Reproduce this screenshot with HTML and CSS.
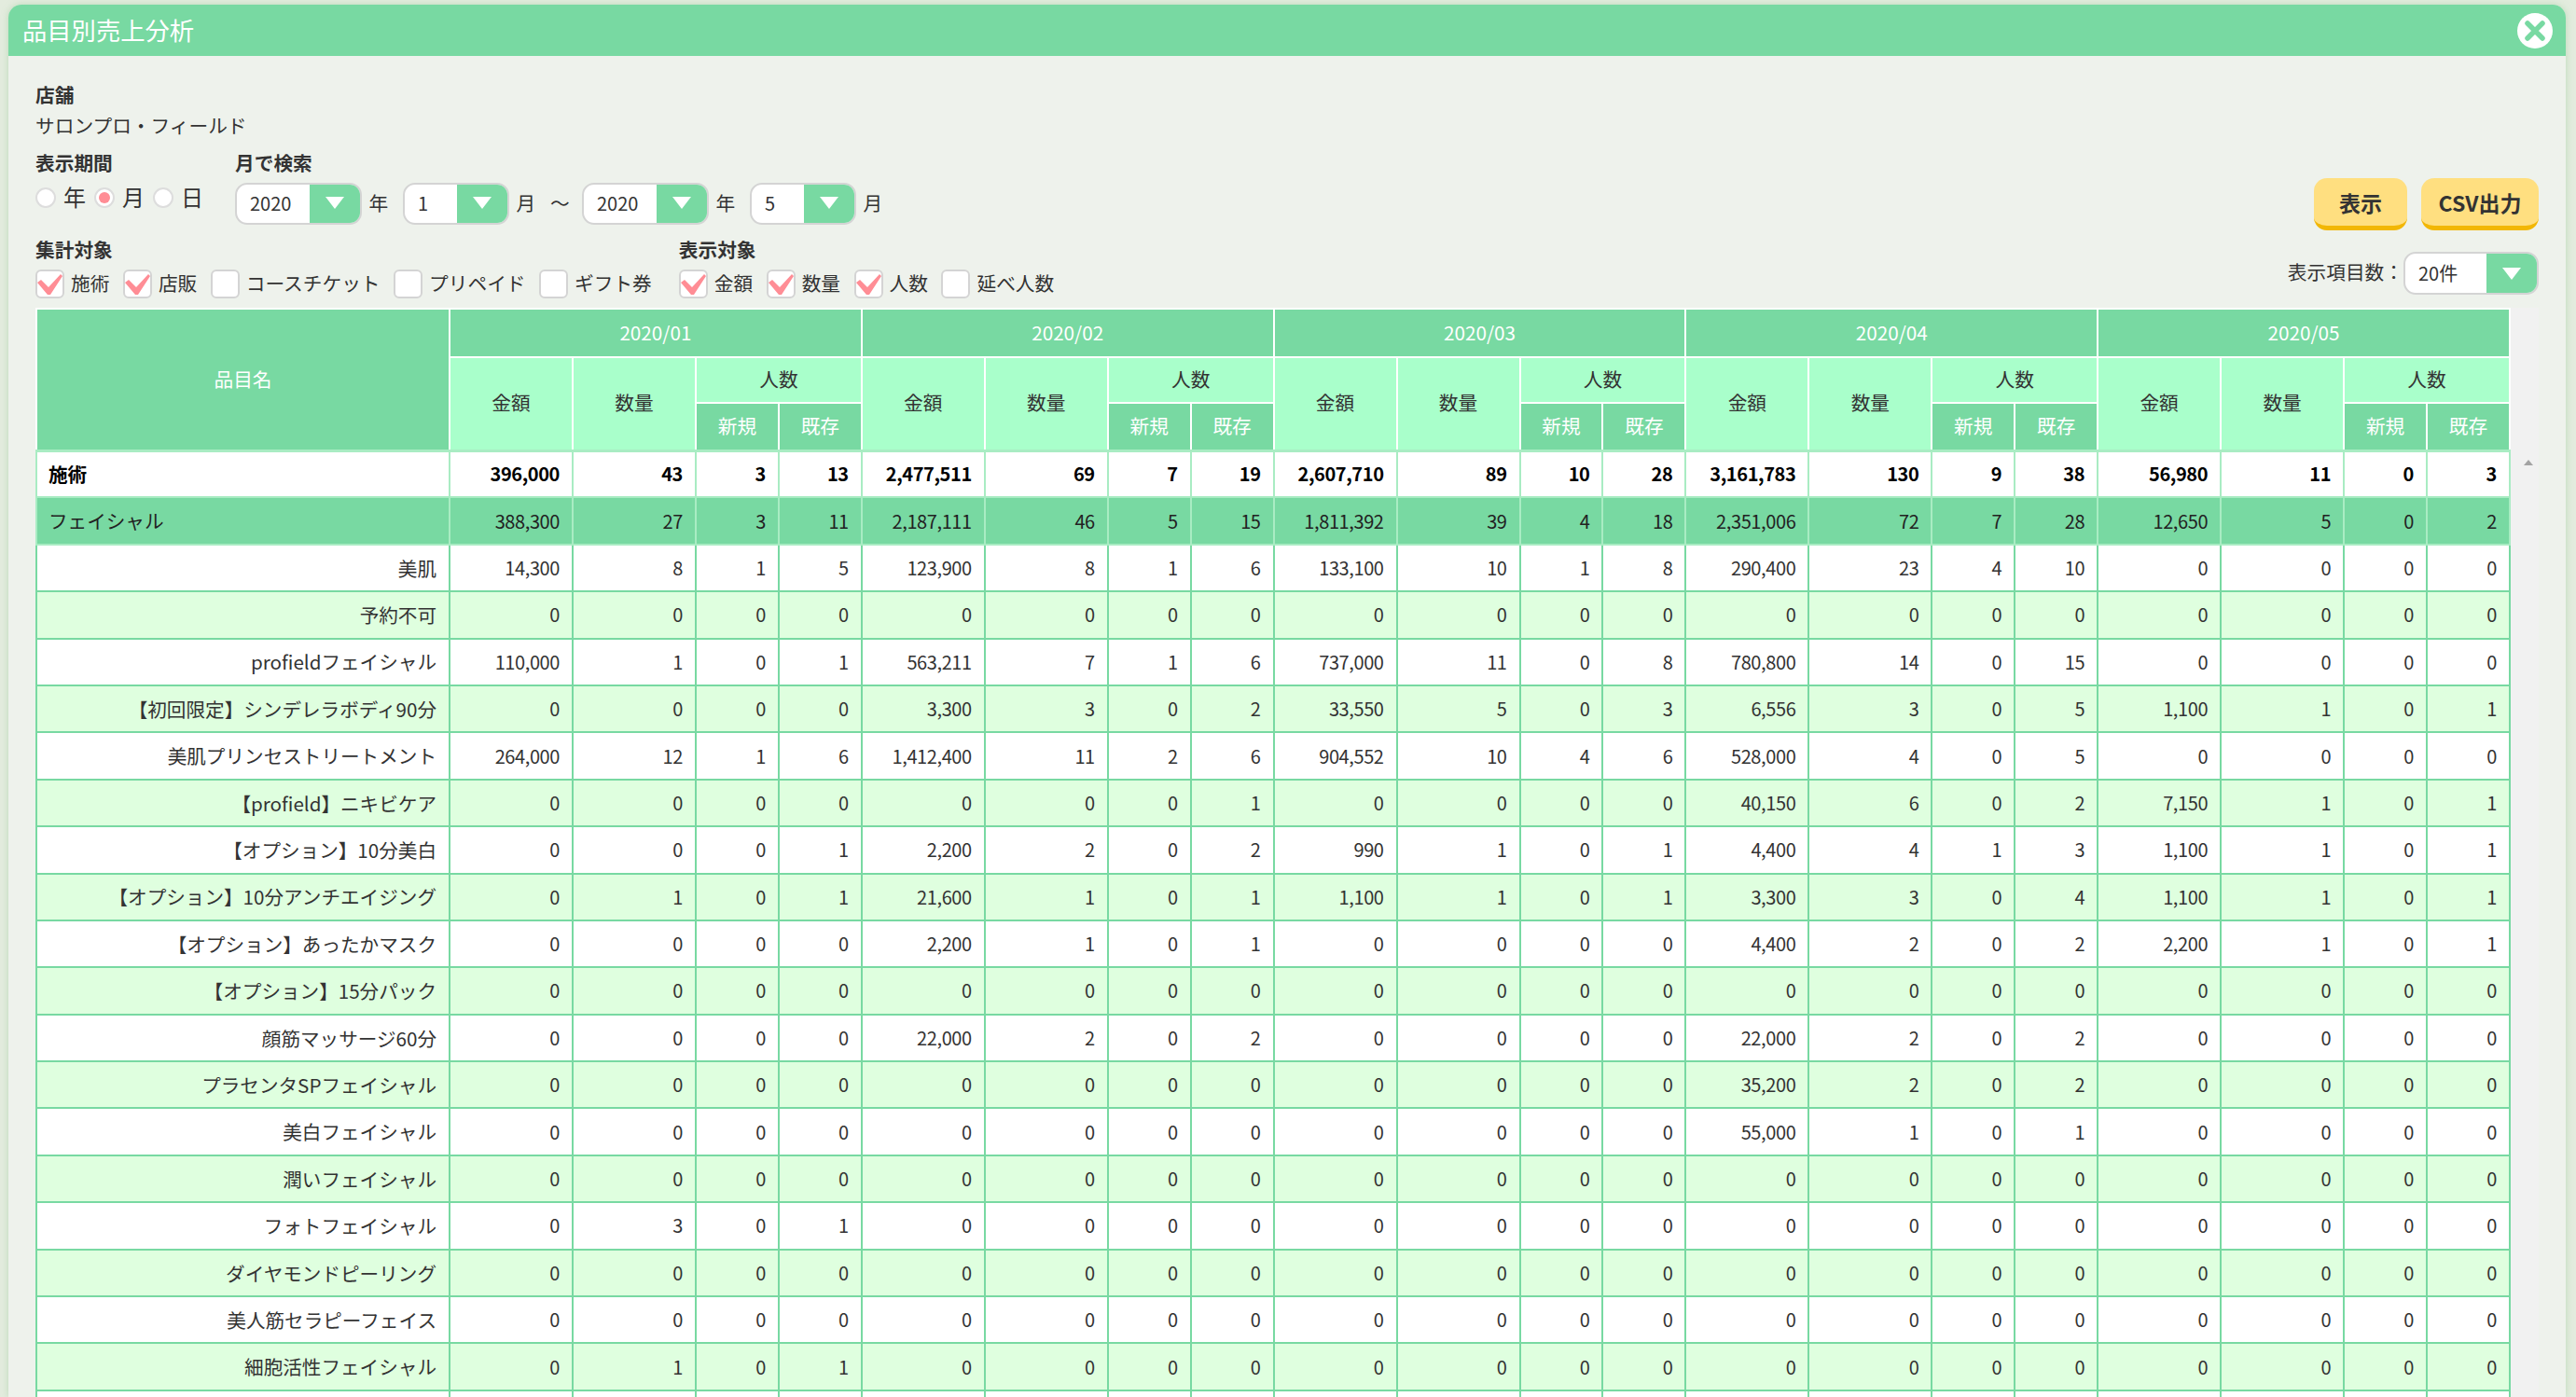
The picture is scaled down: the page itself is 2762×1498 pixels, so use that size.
FILE: index.html
```html
<!DOCTYPE html>
<html lang="ja">
<head>
  <meta charset="UTF-8">
  <title>品目別売上分析</title>
  <link rel="stylesheet" href="styles.css">
</head>
<body>
  <div class="modal">
    <div class="modal-header">
      <h1>品目別売上分析</h1>
      <button class="close-btn" aria-label="閉じる">
        <svg width="38" height="38" viewBox="0 0 38 38"><circle cx="19" cy="19" r="19" fill="#fff"/><path d="M11 11 27 27M27 11 11 27" stroke="#78d9a2" stroke-width="5.5" stroke-linecap="round"/></svg>
      </button>
    </div>

    <div class="modal-body">
      <div class="filters">
        <div class="filters-left">
          <div class="label">店舗</div>
          <div class="shop-name">サロンプロ・フィールド</div>

          <div class="period-row">
            <div class="period-type">
              <div class="label">表示期間</div>
              <div class="radios">
                <span class="radio"></span><span class="radio-text">年</span>
                <span class="radio checked"></span><span class="radio-text">月</span>
                <span class="radio"></span><span class="radio-text">日</span>
              </div>
            </div>
            <div>
              <div class="label">月で検索</div>
              <div class="range">
                <div class="select year"><span>2020</span><i class="arrow"></i></div><span class="unit">年</span>
                <div class="select month"><span>1</span><i class="arrow"></i></div><span class="unit">月</span>
                <span class="tilde">～</span>
                <div class="select year"><span>2020</span><i class="arrow"></i></div><span class="unit">年</span>
                <div class="select month"><span>5</span><i class="arrow"></i></div><span class="unit">月</span>
              </div>
            </div>
          </div>

          <div class="target-row">
            <div class="target-group">
              <div class="label">集計対象</div>
              <div class="checks">
                <label class="check on"><i class="box"><svg width="27" height="27" viewBox="0 0 27 27"><polygon points="0,12 4,9 12,17 25,3 27,5 14,25 11,25" fill="#ff8d95"/></svg></i>施術</label>
                <label class="check on"><i class="box"><svg width="27" height="27" viewBox="0 0 27 27"><polygon points="0,12 4,9 12,17 25,3 27,5 14,25 11,25" fill="#ff8d95"/></svg></i>店販</label>
                <label class="check"><i class="box"></i>コースチケット</label>
                <label class="check"><i class="box"></i>プリペイド</label>
                <label class="check"><i class="box"></i>ギフト券</label>
              </div>
            </div>
            <div class="target-group">
              <div class="label">表示対象</div>
              <div class="checks">
                <label class="check on"><i class="box"><svg width="27" height="27" viewBox="0 0 27 27"><polygon points="0,12 4,9 12,17 25,3 27,5 14,25 11,25" fill="#ff8d95"/></svg></i>金額</label>
                <label class="check on"><i class="box"><svg width="27" height="27" viewBox="0 0 27 27"><polygon points="0,12 4,9 12,17 25,3 27,5 14,25 11,25" fill="#ff8d95"/></svg></i>数量</label>
                <label class="check on"><i class="box"><svg width="27" height="27" viewBox="0 0 27 27"><polygon points="0,12 4,9 12,17 25,3 27,5 14,25 11,25" fill="#ff8d95"/></svg></i>人数</label>
                <label class="check"><i class="box"></i>延べ人数</label>
              </div>
            </div>
          </div>
        </div>

        <div class="filters-right">
          <div class="buttons">
            <button class="btn show-btn">表示</button>
            <button class="btn csv-btn">CSV出力</button>
          </div>
          <div class="page-size">
            <span class="size-label">表示項目数：</span>
            <div class="select size"><span>20件</span><i class="arrow"></i></div>
          </div>
        </div>
      </div>

      <div class="table-wrap">
        <table class="sales">
          <colgroup>
            <col class="c-name">
            <col class="c-amt"><col class="c-qty"><col class="c-ppl"><col class="c-ppl">
            <col class="c-amt"><col class="c-qty"><col class="c-ppl"><col class="c-ppl">
            <col class="c-amt"><col class="c-qty"><col class="c-ppl"><col class="c-ppl">
            <col class="c-amt"><col class="c-qty"><col class="c-ppl"><col class="c-ppl">
            <col class="c-amt"><col class="c-qty"><col class="c-ppl"><col class="c-ppl">
          </colgroup>
          <thead>
            <tr class="head-1">
              <th rowspan="3" class="dark">品目名</th>
              <th colspan="4" class="dark">2020/01</th>
              <th colspan="4" class="dark">2020/02</th>
              <th colspan="4" class="dark">2020/03</th>
              <th colspan="4" class="dark">2020/04</th>
              <th colspan="4" class="dark">2020/05</th>
            </tr>
            <tr class="head-2">
              <th rowspan="2">金額</th><th rowspan="2">数量</th><th colspan="2">人数</th>
              <th rowspan="2">金額</th><th rowspan="2">数量</th><th colspan="2">人数</th>
              <th rowspan="2">金額</th><th rowspan="2">数量</th><th colspan="2">人数</th>
              <th rowspan="2">金額</th><th rowspan="2">数量</th><th colspan="2">人数</th>
              <th rowspan="2">金額</th><th rowspan="2">数量</th><th colspan="2">人数</th>
            </tr>
            <tr class="head-3">
              <th class="dark">新規</th><th class="dark">既存</th>
              <th class="dark">新規</th><th class="dark">既存</th>
              <th class="dark">新規</th><th class="dark">既存</th>
              <th class="dark">新規</th><th class="dark">既存</th>
              <th class="dark">新規</th><th class="dark">既存</th>
            </tr>
          </thead>
          <tbody>
            <tr class="total"><td class="name">施術</td><td>396,000</td><td>43</td><td>3</td><td>13</td><td>2,477,511</td><td>69</td><td>7</td><td>19</td><td>2,607,710</td><td>89</td><td>10</td><td>28</td><td>3,161,783</td><td>130</td><td>9</td><td>38</td><td>56,980</td><td>11</td><td>0</td><td>3</td></tr>
            <tr class="category"><td class="name">フェイシャル</td><td>388,300</td><td>27</td><td>3</td><td>11</td><td>2,187,111</td><td>46</td><td>5</td><td>15</td><td>1,811,392</td><td>39</td><td>4</td><td>18</td><td>2,351,006</td><td>72</td><td>7</td><td>28</td><td>12,650</td><td>5</td><td>0</td><td>2</td></tr>
            <tr><td class="name">美肌</td><td>14,300</td><td>8</td><td>1</td><td>5</td><td>123,900</td><td>8</td><td>1</td><td>6</td><td>133,100</td><td>10</td><td>1</td><td>8</td><td>290,400</td><td>23</td><td>4</td><td>10</td><td>0</td><td>0</td><td>0</td><td>0</td></tr>
            <tr class="alt"><td class="name">予約不可</td><td>0</td><td>0</td><td>0</td><td>0</td><td>0</td><td>0</td><td>0</td><td>0</td><td>0</td><td>0</td><td>0</td><td>0</td><td>0</td><td>0</td><td>0</td><td>0</td><td>0</td><td>0</td><td>0</td><td>0</td></tr>
            <tr><td class="name">profieldフェイシャル</td><td>110,000</td><td>1</td><td>0</td><td>1</td><td>563,211</td><td>7</td><td>1</td><td>6</td><td>737,000</td><td>11</td><td>0</td><td>8</td><td>780,800</td><td>14</td><td>0</td><td>15</td><td>0</td><td>0</td><td>0</td><td>0</td></tr>
            <tr class="alt"><td class="name">【初回限定】シンデレラボディ90分</td><td>0</td><td>0</td><td>0</td><td>0</td><td>3,300</td><td>3</td><td>0</td><td>2</td><td>33,550</td><td>5</td><td>0</td><td>3</td><td>6,556</td><td>3</td><td>0</td><td>5</td><td>1,100</td><td>1</td><td>0</td><td>1</td></tr>
            <tr><td class="name">美肌プリンセストリートメント</td><td>264,000</td><td>12</td><td>1</td><td>6</td><td>1,412,400</td><td>11</td><td>2</td><td>6</td><td>904,552</td><td>10</td><td>4</td><td>6</td><td>528,000</td><td>4</td><td>0</td><td>5</td><td>0</td><td>0</td><td>0</td><td>0</td></tr>
            <tr class="alt"><td class="name">【profield】ニキビケア</td><td>0</td><td>0</td><td>0</td><td>0</td><td>0</td><td>0</td><td>0</td><td>1</td><td>0</td><td>0</td><td>0</td><td>0</td><td>40,150</td><td>6</td><td>0</td><td>2</td><td>7,150</td><td>1</td><td>0</td><td>1</td></tr>
            <tr><td class="name">【オプション】10分美白</td><td>0</td><td>0</td><td>0</td><td>1</td><td>2,200</td><td>2</td><td>0</td><td>2</td><td>990</td><td>1</td><td>0</td><td>1</td><td>4,400</td><td>4</td><td>1</td><td>3</td><td>1,100</td><td>1</td><td>0</td><td>1</td></tr>
            <tr class="alt"><td class="name">【オプション】10分アンチエイジング</td><td>0</td><td>1</td><td>0</td><td>1</td><td>21,600</td><td>1</td><td>0</td><td>1</td><td>1,100</td><td>1</td><td>0</td><td>1</td><td>3,300</td><td>3</td><td>0</td><td>4</td><td>1,100</td><td>1</td><td>0</td><td>1</td></tr>
            <tr><td class="name">【オプション】あったかマスク</td><td>0</td><td>0</td><td>0</td><td>0</td><td>2,200</td><td>1</td><td>0</td><td>1</td><td>0</td><td>0</td><td>0</td><td>0</td><td>4,400</td><td>2</td><td>0</td><td>2</td><td>2,200</td><td>1</td><td>0</td><td>1</td></tr>
            <tr class="alt"><td class="name">【オプション】15分パック</td><td>0</td><td>0</td><td>0</td><td>0</td><td>0</td><td>0</td><td>0</td><td>0</td><td>0</td><td>0</td><td>0</td><td>0</td><td>0</td><td>0</td><td>0</td><td>0</td><td>0</td><td>0</td><td>0</td><td>0</td></tr>
            <tr><td class="name">顔筋マッサージ60分</td><td>0</td><td>0</td><td>0</td><td>0</td><td>22,000</td><td>2</td><td>0</td><td>2</td><td>0</td><td>0</td><td>0</td><td>0</td><td>22,000</td><td>2</td><td>0</td><td>2</td><td>0</td><td>0</td><td>0</td><td>0</td></tr>
            <tr class="alt"><td class="name">プラセンタSPフェイシャル</td><td>0</td><td>0</td><td>0</td><td>0</td><td>0</td><td>0</td><td>0</td><td>0</td><td>0</td><td>0</td><td>0</td><td>0</td><td>35,200</td><td>2</td><td>0</td><td>2</td><td>0</td><td>0</td><td>0</td><td>0</td></tr>
            <tr><td class="name">美白フェイシャル</td><td>0</td><td>0</td><td>0</td><td>0</td><td>0</td><td>0</td><td>0</td><td>0</td><td>0</td><td>0</td><td>0</td><td>0</td><td>55,000</td><td>1</td><td>0</td><td>1</td><td>0</td><td>0</td><td>0</td><td>0</td></tr>
            <tr class="alt"><td class="name">潤いフェイシャル</td><td>0</td><td>0</td><td>0</td><td>0</td><td>0</td><td>0</td><td>0</td><td>0</td><td>0</td><td>0</td><td>0</td><td>0</td><td>0</td><td>0</td><td>0</td><td>0</td><td>0</td><td>0</td><td>0</td><td>0</td></tr>
            <tr><td class="name">フォトフェイシャル</td><td>0</td><td>3</td><td>0</td><td>1</td><td>0</td><td>0</td><td>0</td><td>0</td><td>0</td><td>0</td><td>0</td><td>0</td><td>0</td><td>0</td><td>0</td><td>0</td><td>0</td><td>0</td><td>0</td><td>0</td></tr>
            <tr class="alt"><td class="name">ダイヤモンドピーリング</td><td>0</td><td>0</td><td>0</td><td>0</td><td>0</td><td>0</td><td>0</td><td>0</td><td>0</td><td>0</td><td>0</td><td>0</td><td>0</td><td>0</td><td>0</td><td>0</td><td>0</td><td>0</td><td>0</td><td>0</td></tr>
            <tr><td class="name">美人筋セラピーフェイス</td><td>0</td><td>0</td><td>0</td><td>0</td><td>0</td><td>0</td><td>0</td><td>0</td><td>0</td><td>0</td><td>0</td><td>0</td><td>0</td><td>0</td><td>0</td><td>0</td><td>0</td><td>0</td><td>0</td><td>0</td></tr>
            <tr class="alt"><td class="name">細胞活性フェイシャル</td><td>0</td><td>1</td><td>0</td><td>1</td><td>0</td><td>0</td><td>0</td><td>0</td><td>0</td><td>0</td><td>0</td><td>0</td><td>0</td><td>0</td><td>0</td><td>0</td><td>0</td><td>0</td><td>0</td><td>0</td></tr>
            <tr><td class="name"></td><td></td><td></td><td></td><td></td><td></td><td></td><td></td><td></td><td></td><td></td><td></td><td></td><td></td><td></td><td></td><td></td><td></td><td></td><td></td><td></td></tr>
          </tbody>
        </table>
        <div class="scrollbar"><i class="scroll-up"></i></div>
      </div>
    </div>
  </div>
</body>
</html>
```

FILE: styles.css
```css
* {
  box-sizing: border-box;
}
html, body {
  height: 100%;
}
body {
  margin: 0;
  padding: 5px 11px 0 9px;
  overflow: hidden;
  background: #e3ecde;
  color: #333;
  font-family: "Noto Sans CJK JP", "Noto Sans", sans-serif;
  font-size: 20.7px;
}
.modal {
  height: 1493px;
  background: #eef2ec;
  border-radius: 14px 14px 0 0;
  box-shadow: 0 0 7px rgba(150, 200, 150, 0.5);
  overflow: hidden;
}
.modal-header {
  display: flex;
  align-items: center;
  justify-content: space-between;
  height: 55px;
  padding: 0 14px 0 15px;
  background: #78d9a2;
}
.modal-header h1 {
  margin: 0;
  color: #fff;
  font-size: 26.3px;
  font-weight: 400;
  line-height: 1;
}
.close-btn {
  display: block;
  padding: 0;
  border: none;
  background: none;
  height: 38px;
}
.modal-body {
  padding: 29px 29px 0;
}

/* search form */
.filters {
  display: flex;
  justify-content: space-between;
  height: 241px;
}
.label {
  height: 26px;
  line-height: 24px;
  font-weight: 700;
}
.shop-name {
  height: 26px;
  margin-top: 7px;
  line-height: 24px;
}
.period-row {
  display: flex;
  margin-top: 14px;
}
.period-type {
  width: 214px;
}
.radios {
  display: flex;
  align-items: center;
  height: 22px;
  margin-top: 13px;
}
.radio {
  position: relative;
  width: 22px;
  height: 22px;
  margin-right: 8px;
  border: 2px solid #ddd;
  border-radius: 50%;
  background: #fff;
}
.radio.checked::after {
  content: "";
  position: absolute;
  top: 3px;
  left: 3px;
  width: 12px;
  height: 12px;
  border-radius: 50%;
  background: #ff8d95;
}
.radio-text {
  width: 33px;
  margin-bottom: 3px;
  font-size: 24px;
  line-height: 22px;
}
.range {
  display: flex;
  align-items: center;
  margin-top: 8px;
}
.select {
  display: flex;
  align-items: center;
  justify-content: space-between;
  height: 45px;
  padding-left: 14px;
  border: 2px solid #d4d4d4;
  border-radius: 13px;
  background: #fff;
  font-size: 20px;
  overflow: hidden;
}
.select span {
  margin-bottom: 2px;
}
.select.year {
  width: 135.5px;
}
.select.month {
  width: 113.5px;
}
.select.size {
  width: 145px;
  height: 46px;
}
.arrow {
  position: relative;
  flex: none;
  align-self: stretch;
  width: 56px;
  margin: -2px -2px -2px 0;
  background: #78d9a2;
}
.arrow::after {
  content: "";
  position: absolute;
  top: 15px;
  left: 17px;
  border-top: 13px solid #fff;
  border-left: 10px solid transparent;
  border-right: 10px solid transparent;
}
.size .arrow::after {
  top: 17px;
}
.unit {
  width: 44.5px;
  padding-left: 8px;
  padding-bottom: 3px;
}
.tilde {
  width: 34px;
  padding-bottom: 3px;
}
.target-row {
  display: flex;
  gap: 29px;
  margin-top: 14px;
}
.checks {
  display: flex;
  gap: 14.5px;
  margin-top: 8px;
}
.check {
  display: flex;
  align-items: center;
  gap: 7px;
  height: 31px;
  padding-bottom: 3px;
}
.box {
  display: block;
  flex: none;
  width: 31px;
  height: 31px;
  margin-bottom: -3px;
  border: 2px solid #d4d4d4;
  border-radius: 6px;
  background: #fff;
}
.box svg {
  display: block;
}
.filters-right {
  display: flex;
  flex-direction: column;
  align-items: flex-end;
  padding-top: 102px;
}
.buttons {
  display: flex;
  gap: 15px;
}
.btn {
  height: 56px;
  padding: 0;
  border: none;
  border-bottom: 5px solid #f2b705;
  border-radius: 14px;
  background: #ffdf80;
  color: #333;
  font-family: inherit;
  font-size: 23px;
  font-weight: 700;
}
.show-btn {
  width: 100px;
}
.csv-btn {
  width: 126px;
}
.page-size {
  display: flex;
  align-items: center;
  margin-top: 23px;
}
.size-label {
  margin-bottom: 5px;
}

/* table */
.table-wrap {
  display: flex;
  height: 1168px;
  overflow: hidden;
}
.sales {
  flex: none;
  width: 2652px;
  table-layout: fixed;
  border-collapse: collapse;
  align-self: flex-start;
}
.c-name {
  width: 443px;
}
.c-amt {
  width: 132px;
}
.c-qty {
  width: 132px;
}
.c-ppl {
  width: 88.9px;
}
.sales th {
  padding: 0 0 2px;
  border: 2px solid #fff;
  background: #a9ffcb;
  color: #333;
  font-size: 20.7px;
  font-weight: 400;
}
.sales th.dark {
  background: #78d9a2;
  color: #fff;
}
.head-1 {
  height: 52px;
}
.head-2 {
  height: 49px;
}
.head-2 th {
  padding-bottom: 4px;
}
.head-3 {
  height: 51px;
}
.sales tbody {
  border-top: 3px solid #a9ecc3;
}
.sales td {
  height: 50.4px;
  padding: 0 13px 0 0;
  border: 2px solid #78d9a2;
  background: #fff;
  font-size: 20px;
  letter-spacing: -0.4px;
  text-align: right;
  line-height: 1;
}
.sales td.name {
  padding-right: 13px;
  font-size: 20.6px;
  letter-spacing: 0;
}
.sales .total td {
  border-color: #a9ecc3;
  color: #000;
  font-weight: 700;
}
.sales .total td.name,
.sales .category td.name {
  padding-left: 12px;
  text-align: left;
}
.sales .category td {
  border-color: #a9ecc3;
  background: #78d9a2;
  color: #222;
}
.sales .alt td {
  background: #dfffdf;
}
.scrollbar {
  flex: none;
  position: relative;
  width: 32px;
  background: #f1f1f1;
}
.scroll-up {
  position: absolute;
  top: 163px;
  left: 14px;
  border-bottom: 6px solid #a3a3a3;
  border-left: 5.5px solid transparent;
  border-right: 5.5px solid transparent;
}
```
